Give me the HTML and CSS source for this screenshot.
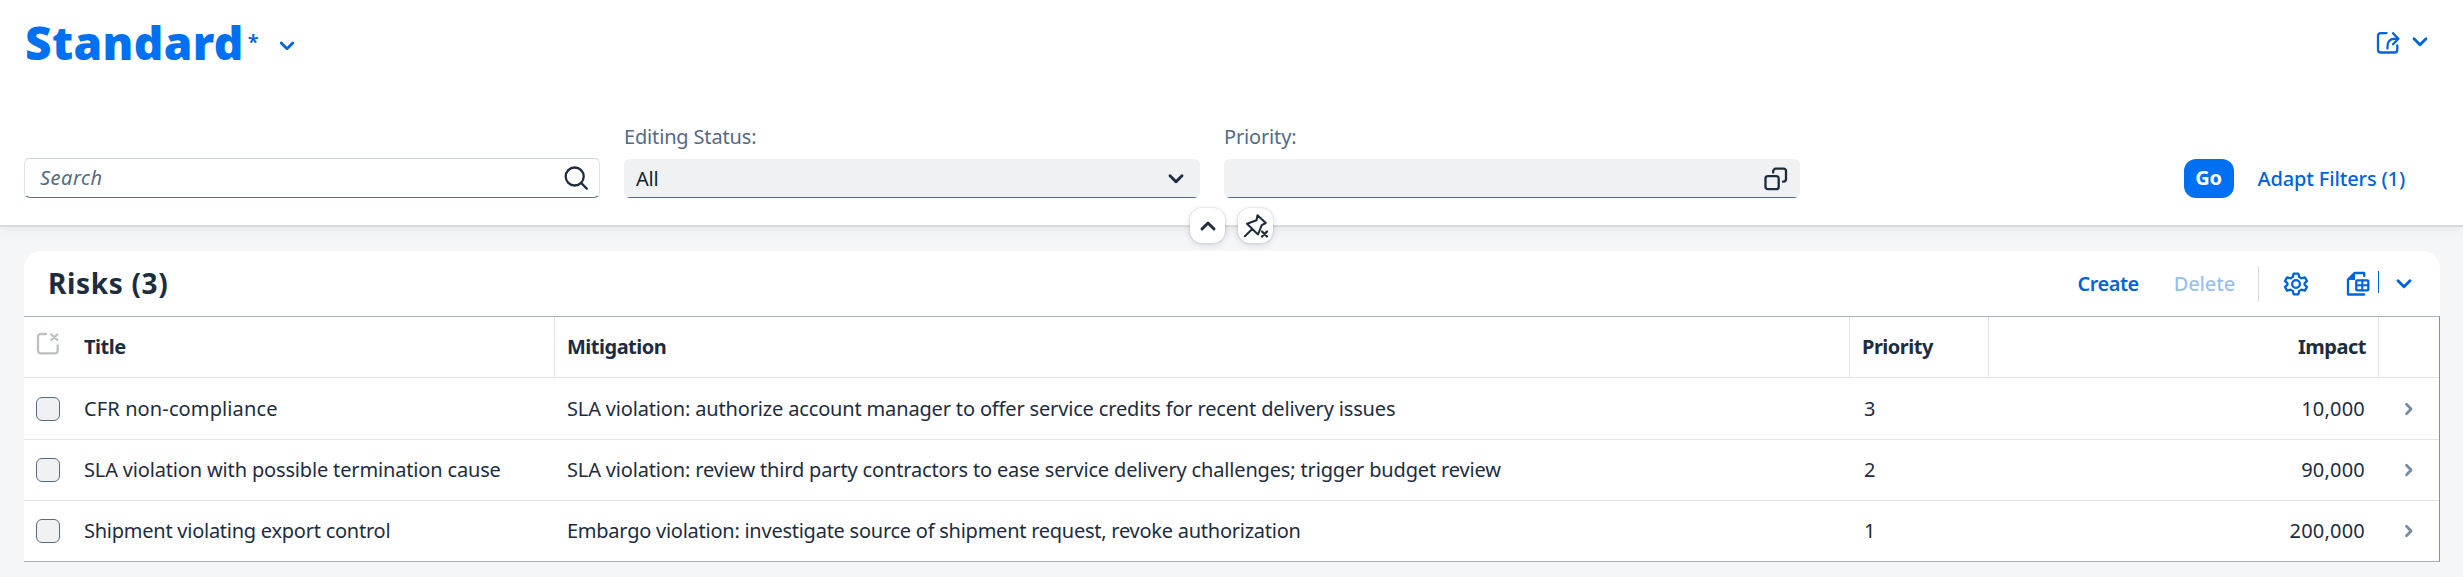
FILE: index.html
```html
<!DOCTYPE html>
<html lang="en">
<head>
<meta charset="utf-8">
<title>Risks</title>
<link rel="stylesheet" href="styles.css">
</head>
<body>
<header class="page-header">
  <div class="title-row">
    <h1 class="variant">Standard</h1>
    <span class="dirty">*</span>
    <svg class="variant-arrow" width="16" height="10" viewBox="0 0 16 10"><path class="stroke bold" d="M2.200 2 8 7.800 13.800 2"/></svg>
    <div class="share">
      <svg width="24" height="24" viewBox="0 0 24 24"><path class="stroke" d="M10.500 2.100H4.800A2.800 2.800 0 0 0 2 4.900v13.800a2.800 2.800 0 0 0 2.800 2.800h13.700a2.800 2.800 0 0 0 2.800-2.800V14.500M11.500 17.500V15.500C11.500 10.800 14 7.800 18 7.800h4M17 2.300l5.400 5.400-5.400 5.500"/></svg>
      <svg width="16" height="10" viewBox="0 0 16 10"><path class="stroke thick" d="M2 1.700 8 7.700l6-6"/></svg>
    </div>
  </div>
  <div class="filters">
    <div class="field search">
      <span class="placeholder">Search</span>
      <svg width="26" height="26" viewBox="0 0 26 26"><circle class="stroke" cx="11.700" cy="11.500" r="9"/><path class="stroke" d="m18.200 18 5.600 5.600"/></svg>
    </div>
    <div class="field-group">
      <label class="label">Editing Status:</label>
      <div class="field filled"><span>All</span>
        <svg class="select-arrow" width="16" height="10" viewBox="0 0 16 10"><path class="stroke thick" d="M2 1.700 8 7.700l6-6"/></svg>
      </div>
    </div>
    <div class="field-group">
      <label class="label">Priority:</label>
      <div class="field filled"><span></span>
        <svg class="value-help" width="24" height="24" viewBox="0 0 24 24"><rect class="stroke" x="1.500" y="9.200" width="13.200" height="13" rx="2.500"/><path class="stroke" d="M9.200 5.500V4.300a2.600 2.600 0 0 1 2.600-2.600h7.600A2.600 2.600 0 0 1 22 4.300v7.800a2.600 2.600 0 0 1-2.600 2.600h-.4"/></svg>
      </div>
    </div>
    <div class="filter-actions">
      <button class="go">Go</button>
      <button class="link">Adapt Filters (1)</button>
    </div>
  </div>
  <div class="header-toggles">
    <button class="toggle"><svg width="16" height="10" viewBox="0 0 16 10"><path class="stroke thick" d="m2 8 6-6 6 6"/></svg></button>
    <button class="toggle"><svg width="26" height="26" viewBox="0 0 26 26"><path class="stroke pin" d="M14.500 2.200 22.800 10 18.700 12.200 15 21.500 4 10.800 13.500 7.200 14.500 2.200ZM9.300 16 1.800 23.200"/><path class="stroke" d="m19 18.500 5 5m0-5-5 5"/></svg></button>
  </div>
</header>
<main class="content">
  <section class="card">
    <div class="toolbar">
      <h2 class="table-title">Risks (3)</h2>
      <button class="link create">Create</button>
      <button class="link delete">Delete</button>
      <span class="divider"></span>
      <svg class="gear" width="24" height="26" viewBox="-12 -13 24 26"><path class="stroke" d="M-2.300-10.400H2.300L3.300-6.900 5.400-5.700 8.900-6.600 11-2.900 8.600-.9V.9L11 2.900 8.900 6.600 5.400 5.700 3.300 6.900 2.300 10.400H-2.300L-3.300 6.900-5.400 5.700-8.900 6.600-11 2.900-8.600.9V-.9L-11-2.900-8.900-6.600-5.400-5.700-3.300-6.900Z"/><circle class="stroke" r="3.900"/></svg>
      <svg class="export" width="24" height="26" viewBox="0 0 24 26"><path class="stroke" d="M18.200 5V2H8.500L2 8.500V23.500H18.200"/><path class="solid" d="M9 1.500V9H1.500Z"/><rect class="stroke" x="10.300" y="9.300" width="12" height="10" rx=".8"/><path class="stroke thin" d="M16.300 9.300v10M10.300 14.300h12"/></svg>
      <span class="split"></span>
      <svg width="16" height="10" viewBox="0 0 16 10"><path class="stroke thick" d="M2 1.700 8 7.700l6-6"/></svg>
    </div>
    <div class="table">
      <div class="row head">
        <div class="select"><svg width="24" height="24" viewBox="0 0 24 24"><path class="stroke" d="M10 2H4.700A2.700 2.700 0 0 0 2 4.700v14A2.700 2.700 0 0 0 4.700 21.400H19A2.700 2.700 0 0 0 21.700 18.700V13.300M15.300 2.500l6 5.500m0-5.500-6 5.500"/></svg></div>
        <div class="cell">Title</div><div class="cell">Mitigation</div><div class="cell">Priority</div><div class="cell number">Impact</div><div class="nav"></div>
      </div>
      <div class="row first">
        <div class="select"><span class="checkbox"></span></div>
        <div class="cell loose">CFR non-compliance</div><div class="cell">SLA violation: authorize account manager to offer service credits for recent delivery issues</div><div class="cell level">3</div><div class="cell number">10,000</div>
        <div class="nav"><svg width="10" height="14" viewBox="0 0 10 14"><path class="stroke bold" d="m2.500 2.200 4.600 4.800-4.600 4.800"/></svg></div>
      </div>
      <div class="row">
        <div class="select"><span class="checkbox"></span></div>
        <div class="cell">SLA violation with possible termination cause</div><div class="cell">SLA violation: review third party contractors to ease service delivery challenges; trigger budget review</div><div class="cell level">2</div><div class="cell number">90,000</div>
        <div class="nav"><svg width="10" height="14" viewBox="0 0 10 14"><path class="stroke bold" d="m2.500 2.200 4.600 4.800-4.600 4.800"/></svg></div>
      </div>
      <div class="row">
        <div class="select"><span class="checkbox"></span></div>
        <div class="cell tight">Shipment violating export control</div><div class="cell tight">Embargo violation: investigate source of shipment request, revoke authorization</div><div class="cell level">1</div><div class="cell number">200,000</div>
        <div class="nav"><svg width="10" height="14" viewBox="0 0 10 14"><path class="stroke bold" d="m2.500 2.200 4.600 4.800-4.600 4.800"/></svg></div>
      </div>
    </div>
  </section>
</main>
</body>
</html>
```
FILE: styles.css
```css
* { box-sizing: border-box; }
html, body { height: 100%; }
body {
  margin: 0;
  overflow: hidden;
  background: #f5f6f8;
  color: #1d2d3e;
  font: 20px/28px "Noto Sans", "Open Sans", sans-serif;
  letter-spacing: -0.16px;
}
svg { display: block; flex: none; overflow: visible; }
button { font: inherit; letter-spacing: inherit; border: 0; margin: 0; padding: 0; background: none; }
.stroke { fill: none; stroke: currentColor; stroke-width: 2.3; stroke-linecap: round; stroke-linejoin: round; }
.bold { stroke-width: 2.7; }
.thick { stroke-width: 2.9; }
.thin { stroke-width: 2; }
.pin { stroke-width: 2; }
.solid { fill: currentColor; }

.page-header {
  position: relative;
  height: 227px;
  background: #fff;
  border-bottom: 2px solid #d9dadb;
  box-shadow: 0 3px 10px rgba(34, 53, 72, 0.07);
}
.title-row { display: flex; height: 84px; padding: 0 35px 0 24px; color: #0064d9; }
.variant {
  margin: 0;
  padding: 12px 0 0 1px;
  color: #0070f2;
  font-size: 46px;
  line-height: 60px;
  font-weight: 900;
  letter-spacing: 0.4px;
}
.dirty { padding: 28px 0 0 4px; font-size: 20px; font-weight: 600; }
.variant-arrow { margin: 41px 0 0 20px; }
.share { display: flex; gap: 12px; margin-left: auto; padding-top: 31px; }
.share svg:last-child { margin-top: 6px; }

.filters { display: flex; align-items: flex-end; gap: 24px; height: 114px; padding: 0 24px; }
.field-group { width: 576px; }
.field {
  display: flex;
  align-items: center;
  justify-content: space-between;
  width: 576px;
  height: 39px;
  border-radius: 6px;
}
.filled { padding: 0 12px; background: linear-gradient(#556b82, #556b82) 3px 100% / 570px 1px no-repeat #eff1f2; color: #131e29; }
.select-arrow { margin-right: 4px; color: #1d2d3e; }
.value-help { color: #1d2d3e; }
.search {
  height: 40px;
  padding: 0 10px 0 15px;
  background: #fff;
  border: 1px solid #dde2e7;
  border-top-color: #c4ccd4;
  border-bottom-color: #557289;
}
.placeholder { color: #556b82; font-style: italic; letter-spacing: 0.5px; }
.label { display: block; height: 35px; color: #556b82; line-height: 26px; }
.filter-actions { display: flex; align-items: center; gap: 24px; margin-left: auto; padding-right: 34px; }
.go { width: 50px; height: 39px; padding-bottom: 1px; border-radius: 12px; background: #0070f2; color: #fff; font-weight: 700; }
.link { color: #0064d9; font-weight: 500; letter-spacing: -0.15px; white-space: nowrap; }

/* Collapse and pin buttons straddle the lower edge of the header. */
.header-toggles { position: absolute; z-index: 1; top: 208px; left: 1190px; display: flex; gap: 13px; }
.toggle {
  display: flex;
  align-items: center;
  justify-content: center;
  width: 35px;
  height: 35px;
  border-radius: 12px;
  background: #fff;
  color: #1d2d3e;
  box-shadow: 0 0 2px rgba(34, 53, 72, 0.25), 0 2px 6px rgba(34, 53, 72, 0.16);
}

.content { padding: 24px 23px 0 24px; }
.card { background: #fff; border-radius: 18px 18px 0 0; }
.toolbar { display: flex; align-items: center; height: 65px; padding: 0 28px 0 24px; color: #0064d9; }
.table-title { margin: 0 auto 0 0; padding-bottom: 1px; color: #1d2d3e; font-size: 28px; font-weight: 700; letter-spacing: 0.65px; }
.create { margin-right: 35px; font-weight: 600; letter-spacing: -0.5px; }
.delete { margin-right: 23px; opacity: 0.4; }
.divider { width: 1px; height: 36px; background: #d9d9d9; }
.gear { margin: 0 38px 0 25px; }
.split { width: 1px; height: 22px; margin: -3px 17px 0 8px; background: #0064d9; }

.table { border-top: 1px solid #a8b2bd; border-right: 1px solid #8c8f94; border-bottom: 1px solid #a8b2bd; }
.row { display: grid; grid-template-columns: 48px 483px 1295px 139px 390px 1fr; height: 61px; border-bottom: 1px solid #e5e5e5; }
.row:last-child { height: 60px; border-bottom: 0; }
.row.first { height: 62px; }
.cell { display: flex; align-items: center; padding: 0 12px; white-space: nowrap; }
.cell.loose { letter-spacing: 0.12px; }
.cell.tight { letter-spacing: -0.25px; }
.cell.level { padding-left: 14px; }
.cell.number { justify-content: flex-end; padding-right: 14px; letter-spacing: 0.2px; }
.head .cell { border-right: 1px solid #e5e5e5; font-weight: 700; letter-spacing: -0.5px; padding-bottom: 1px; }
.head .cell.number { padding-right: 12px; }
.select { display: flex; align-items: center; padding-left: 12px; }
.head .select { padding-bottom: 7px; color: #bbc0c5; }
.checkbox { width: 24px; height: 24px; border: 1px solid #556b82; border-radius: 6px; background: #eff1f2; }
.nav { display: flex; align-items: center; padding-left: 25px; color: #758ca4; }
```
